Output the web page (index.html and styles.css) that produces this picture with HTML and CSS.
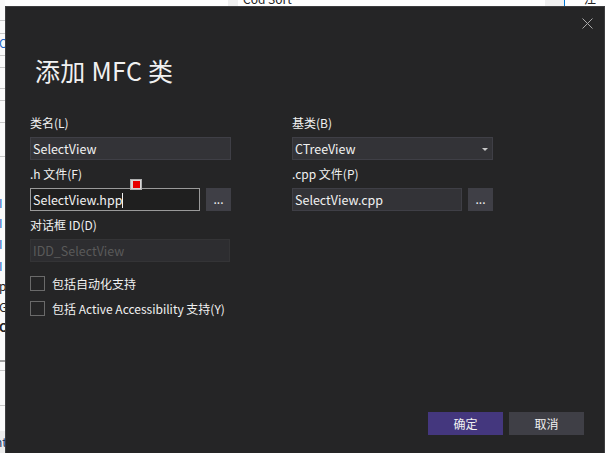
FILE: index.html
```html
<!DOCTYPE html>
<html lang="zh-CN">
<head>
<meta charset="utf-8">
<title>添加 MFC 类</title>
<link rel="stylesheet" href="styles.css">
</head>
<body>
<div class="desktop">
  <div class="bg-top"><span class="bg-tab"></span><span class="bg-text">Cod Sort</span><span class="bg-tab2"></span><span class="bg-blue"></span><span class="bg-text2">江</span></div>
  <div class="bg-left">
    <span class="ln" style="top:20px"></span>
    <span class="ln" style="top:33px"></span>
    <span class="ch blue" style="top:37px">O</span>
    <span class="ln" style="top:55px"></span>
    <span class="ln" style="top:67px"></span>
    <span class="ln" style="top:88px"></span>
    <span class="ln" style="top:100px"></span>
    <span class="ln" style="top:122px"></span>
    <span class="ln" style="top:156px"></span>
    <span class="ch blue" style="top:197px">I</span>
    <span class="ch blue" style="top:217px">I</span>
    <span class="ch blue" style="top:238px">I</span>
    <span class="ch blue" style="top:260px">I</span>
    <span class="ch" style="top:280px">p</span>
    <span class="ch" style="top:301px">G</span>
    <span class="ch bold" style="top:321px">O</span>
    <span class="ln dark" style="top:360px"></span>
    <span class="ln" style="top:370px"></span>
    <span class="ln" style="top:405px"></span>
    <span class="bg-foot"><span class="ch2">nt</span></span>
  </div>

  <div class="dialog">
    <button class="close" aria-label="关闭">
      <svg width="11" height="11" viewBox="0 0 11 11"><path d="M0.5 0.5 L10.5 10.5 M10.5 0.5 L0.5 10.5" stroke="#a8a8a8" stroke-width="1" fill="none"/></svg>
    </button>
    <h1 class="title">添加 MFC 类</h1>

    <div class="form">
      <div class="col">
        <label class="label">类名(L)</label>
        <div class="input">SelectView</div>
        <label class="label">.h 文件(F)</label>
        <div class="row">
          <div class="input focused short">SelectView.hpp<span class="caret"></span></div>
          <div class="browse">...</div>
        </div>
        <label class="label">对话框 ID(D)</label>
        <div class="input disabled">IDD_SelectView</div>
        <div class="checks">
          <div class="check"><span class="box"></span><span>包括自动化支持</span></div>
          <div class="check"><span class="box"></span><span>包括 Active Accessibility 支持(Y)</span></div>
        </div>
        <span class="marker"><span class="marker-in"></span></span>
      </div>
      <div class="col">
        <label class="label">基类(B)</label>
        <div class="input combo">CTreeView<span class="arrow"></span></div>
        <label class="label">.cpp 文件(P)</label>
        <div class="row">
          <div class="input short">SelectView.cpp</div>
          <div class="browse">...</div>
        </div>
      </div>
    </div>

    <div class="footer">
      <button class="btn primary">确定</button>
      <button class="btn">取消</button>
    </div>
  </div>
</div>
</body>
</html>
```
FILE: styles.css
```css
* { box-sizing: border-box; }
html, body { margin: 0; padding: 0; }
body {
  width: 606px;
  height: 453px;
  overflow: hidden;
  background: #ffffff;
  font-family: "Noto Sans CJK SC", "Noto Sans", sans-serif;
  font-size: 12px;
}
.desktop { position: relative; width: 606px; height: 453px; overflow: hidden; }

.bg-top { position: absolute; left: 0; top: 0; width: 606px; height: 6px; }
.bg-tab { position: absolute; left: 228px; top: 0; width: 10px; height: 6px; background: #f0f0f0; }
.bg-text { position: absolute; left: 243px; top: -7px; font-size: 12px; color: #222; line-height: 12px; }
.bg-tab2 { position: absolute; left: 545px; top: 0; width: 19px; height: 6px; background: #f0f0f0; }
.bg-blue { position: absolute; left: 564px; top: 0; width: 1px; height: 6px; background: #0078d7; }
.bg-text2 { position: absolute; left: 584px; top: -7px; font-size: 12px; color: #222; line-height: 12px; }

.bg-left { position: absolute; left: 0; top: 0; width: 5px; height: 453px; background: #fafafa; }
.bg-left .ln { position: absolute; left: 0; width: 5px; height: 1px; background: #c8c8c8; }
.bg-left .ln.dark { height: 2px; background: #a0a0a0; }
.bg-left .ch { position: absolute; left: -1px; font-size: 12px; line-height: 12px; color: #222; }
.bg-left .ch.blue { color: #1a66c8; }
.bg-left .ch.bold { font-weight: 700; }
.bg-foot { position: absolute; left: 0; top: 431px; width: 5px; height: 22px; background: #ececec; }
.bg-foot .ch2 { position: absolute; left: -5px; top: 5px; font-size: 12px; line-height: 12px; color: #1a3a6a; }

.dialog {
  position: absolute;
  left: 5px;
  top: 6px;
  width: 600px;
  height: 460px;
  background: #252526;
  border: 1px solid #3d3d3f;
  color: #f1f1f1;
  display: flex;
  flex-direction: column;
}
.close {
  position: absolute;
  right: 11px;
  top: 11px;
  width: 11px;
  height: 11px;
  padding: 0;
  border: 0;
  background: none;
  display: flex;
}
.title {
  margin: 46px 0 0 29px;
  font-size: 25px;
  line-height: 34px;
  font-weight: 400;
  color: #f1f1f1;
  letter-spacing: 0.3px;
}
.form {
  display: grid;
  grid-template-columns: 201px 201px;
  column-gap: 61px;
  margin: 26px 0 0 24px;
  align-items: start;
}
.col { display: flex; flex-direction: column; position: relative; }
.label {
  display: block;
  height: 18px;
  line-height: 18px;
  margin: 5px 0 5px 0;
  color: #f1f1f1;
}
.col > .label:first-child { margin-top: 1px; }
.input {
  height: 23px;
  line-height: 21px;
  padding: 0 2px;
  background: #333337;
  border: 1px solid #3f3f46;
  color: #f1f1f1;
  font-size: 12.5px;
  position: relative;
}
.input.focused { background: #1f1f1f; border-color: #9a9a9a; }
.input.disabled { background: #2d2d30; border-color: #343436; color: #5a5a5a; width: 200px; }
.row { display: flex; gap: 6px; }
.short { width: 170px; }
.browse {
  width: 25px;
  height: 23px;
  background: #3f3f46;
  color: #f1f1f1;
  text-align: center;
  line-height: 22px;
  font-size: 12px;
}
.caret {
  display: inline-block;
  width: 1px;
  height: 15px;
  background: #f1f1f1;
  vertical-align: middle;
  margin-top: -2px;
}
.arrow {
  position: absolute;
  right: 4px;
  top: 10px;
  width: 0;
  height: 0;
  border-left: 3px solid transparent;
  border-right: 3px solid transparent;
  border-top: 3px solid #c8c8c8;
}
.checks { display: flex; flex-direction: column; gap: 10px; margin-top: 14px; }
.check { display: flex; align-items: center; gap: 7px; height: 15px; color: #f1f1f1; }
.box { width: 15px; height: 15px; border: 1px solid #6a6a6a; flex: none; }
.marker {
  position: absolute;
  left: 100px;
  top: 66px;
  width: 12px;
  height: 11px;
  background: #d8d8d8;
  border: 1px solid #b0b0b0;
  display: flex;
  align-items: center;
  justify-content: center;
}
.marker-in { width: 7px; height: 7px; background: #e80000; }
.footer {
  display: flex;
  justify-content: flex-end;
  gap: 6px;
  position: absolute;
  right: 20px;
  top: 405px;
}
.btn {
  width: 75px;
  height: 23px;
  border: 0;
  padding: 0;
  background: #3f3f46;
  color: #f1f1f1;
  font-family: "Noto Sans CJK SC", sans-serif;
  font-size: 12px;
}
.btn.primary { background: #44377e; }
```
